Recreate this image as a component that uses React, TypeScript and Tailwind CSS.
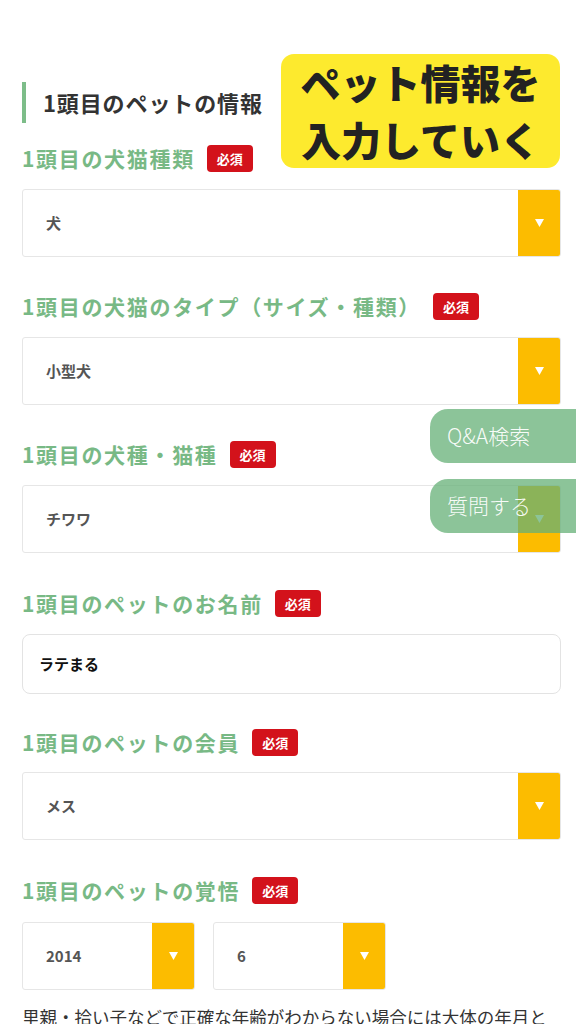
import React from "react";

const jp = { fontFamily: '"Noto Sans CJK JP", "Noto Sans", sans-serif' };

const Badge = () => (
  <span className="ml-[12px] inline-flex h-[27px] w-[46px] items-center justify-center rounded-[4px] bg-[#d3121b] text-[13px] font-bold text-white">
    必須
  </span>
);

const Label = ({ text }: { text: string }) => (
  <div className="flex h-[27px] items-center">
    <span className="text-[21px] font-bold tracking-[0.08em] text-[#78b985]">{text}</span>
    <Badge />
  </div>
);

const Arrow = () => (
  <svg width="9" height="8" viewBox="0 0 9 8">
    <path d="M0 0 H9 L4.5 8 Z" fill="#fff" />
  </svg>
);

const Select = ({ value, className = "" }: { value: string; className?: string }) => (
  <div className={`flex h-[68px] overflow-hidden rounded-[3px] border border-[#e6e6e6] bg-white ${className}`}>
    <div className="flex flex-1 items-center pl-[23px] text-[15px] font-bold text-[#555]">{value}</div>
    <div className="flex w-[42px] items-center justify-center bg-[#fcbc00]">
      <Arrow />
    </div>
  </div>
);

const Field = ({ label, children }: { label: string; children: React.ReactNode }) => (
  <div className="mt-[36px]">
    <Label text={label} />
    <div className="mt-[17px]">{children}</div>
  </div>
);

export default function App() {
  return (
    <div style={jp} className="relative h-[1024px] w-[576px] overflow-hidden bg-white">
      <div className="pl-[22px] pr-[15px] pt-[82px]">
        <div className="flex h-[41px] items-center border-l-4 border-[#7dbd89] pl-[17px] text-[22px] font-bold tracking-[0.04em] text-[#333]">
          1頭目のペットの情報
        </div>

        <div className="mt-[22px]">
          <Label text="1頭目の犬猫種類" />
          <div className="mt-[17px]">
            <Select value="犬" />
          </div>
        </div>

        <Field label="1頭目の犬猫のタイプ（サイズ・種類）">
          <Select value="小型犬" />
        </Field>

        <Field label="1頭目の犬種・猫種">
          <Select value="チワワ" />
        </Field>

        <div className="mt-[37px]">
          <Label text="1頭目のペットのお名前" />
          <div className="mt-[17px] flex h-[60px] items-center rounded-[8px] border border-[#e3e3e3] bg-white pl-[16px] text-[15px] font-bold text-[#111]">
            ラテまる
          </div>
        </div>

        <div className="mt-[35px]">
          <Label text="1頭目のペットの会員" />
          <div className="mt-[16px]">
            <Select value="メス" />
          </div>
        </div>

        <div className="mt-[37px]">
          <Label text="1頭目のペットの覚悟" />
          <div className="mt-[18px] flex gap-[18px]">
            <Select value="2014" className="w-[173px]" />
            <Select value="6" className="w-[173px]" />
          </div>
        </div>

        <p className="mt-[12px] whitespace-nowrap text-[17.5px] leading-[30px] text-[#333]">
          里親・拾い子などで正確な年齢がわからない場合には大体の年月と
        </p>
      </div>

      {/* annotation */}
      <div className="absolute left-[281px] top-[54px] flex h-[114px] w-[279px] flex-col items-center justify-center rounded-[13px] bg-[#fdea2e] text-[40px] font-black leading-[57px] text-[#222]">
        <span>ペット情報を</span>
        <span>入力していく</span>
      </div>

      {/* floating buttons */}
      <div className="absolute right-0 top-[409px] flex h-[54px] w-[146px] items-center rounded-l-[18px] bg-[#66b077]/75 pl-[17px] text-[21px] font-light text-white/95">
        Q&A検索
      </div>
      <div className="absolute right-0 top-[479px] flex h-[54px] w-[146px] items-center rounded-l-[18px] bg-[#66b077]/75 pl-[17px] text-[21px] font-light text-white/95">
        質問する
      </div>
    </div>
  );
}
